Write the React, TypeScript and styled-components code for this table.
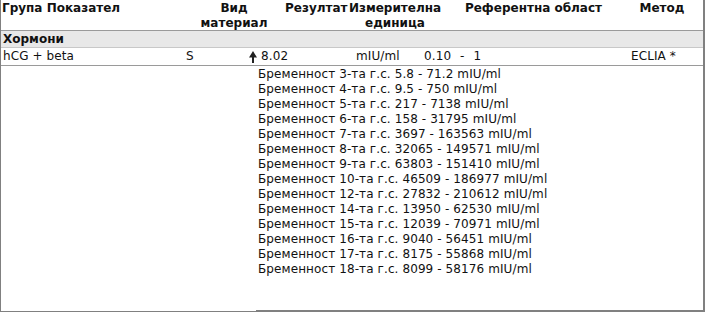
import React from "react";
import styled, { createGlobalStyle } from "styled-components";

const Global = createGlobalStyle`
  html, body { margin: 0; padding: 0; background: #fff; }
  body { font-family: "DejaVu Sans", Verdana, sans-serif; font-size: 12px; letter-spacing: 0.1px; color: #111; }
`;

const Frame = styled.div`
  width: 705px;
  height: 312px;
  box-sizing: border-box;
  border-left: 1px solid #808080;
  border-right: 2px solid #808080;
  border-bottom: 1px solid #808080;
  display: flex;
  flex-direction: column;
`;

const HeaderRow = styled.div`
  display: grid;
  grid-template-columns: 183px 100px 60px 102px 175px 1fr;
  height: 31px;
  box-sizing: border-box;
  padding-top: 1px;
  border-bottom: 1px solid #9a9a9a;
  font-weight: bold;
  line-height: 15px;
  letter-spacing: 0;
`;

const HeadCell = styled.div<{ $align?: "left" | "center" }>`
  text-align: ${(p) => p.$align ?? "center"};
  padding-left: ${(p) => (p.$align === "left" ? "1px" : "0")};
  white-space: nowrap;
`;

const GroupRow = styled.div`
  height: 17px;
  box-sizing: border-box;
  background: #e8e8e8;
  border-bottom: 1px solid #c8c8c8;
  font-weight: bold;
  letter-spacing: 0;
  line-height: 16px;
  padding-left: 2px;
`;

const DataRow = styled.div`
  display: grid;
  grid-template-columns: 183px 63px 107px 68px 207px 1fr;
  height: 18px;
  box-sizing: border-box;
  border-bottom: 1px solid #9a9a9a;
  line-height: 17px;
`;

const Cell = styled.div<{ $wordGap?: number }>`
  padding-left: 2px;
  white-space: pre;
  display: flex;
  align-items: center;
  gap: 4px;
  word-spacing: ${(p) => p.$wordGap ?? 0}px;
`;

const NoteRow = styled.div`
  display: grid;
  grid-template-columns: 255px 1fr;
  flex: 1;
`;

const NoteCell = styled.div`
  grid-column: 2;
  padding: 1px 0 0 2px;
  border-bottom: 1px solid #808080;
  line-height: 15px;
`;

const NoteLine = styled.div`
  white-space: nowrap;
`;

const UpArrow = () => (
  <svg width="8" height="12" viewBox="0 0 8 12" aria-hidden="true">
    <path d="M4 0 L8 6.5 L5 6.5 L5 12 L3 12 L3 6.5 L0 6.5 Z" fill="#222" />
  </svg>
);

const ranges = [
  "Бременност 3-та г.с. 5.8 - 71.2 mIU/ml",
  "Бременност 4-та г.с. 9.5 - 750 mIU/ml",
  "Бременност 5-та г.с. 217 - 7138 mIU/ml",
  "Бременност 6-та г.с. 158 - 31795 mIU/ml",
  "Бременност 7-та г.с. 3697 - 163563 mIU/ml",
  "Бременност 8-та г.с. 32065 - 149571 mIU/ml",
  "Бременност 9-та г.с. 63803 - 151410 mIU/ml",
  "Бременност 10-та г.с. 46509 - 186977 mIU/ml",
  "Бременност 12-та г.с. 27832 - 210612 mIU/ml",
  "Бременност 14-та г.с. 13950 - 62530 mIU/ml",
  "Бременност 15-та г.с. 12039 - 70971 mIU/ml",
  "Бременност 16-та г.с. 9040 - 56451 mIU/ml",
  "Бременност 17-та г.с. 8175 - 55868 mIU/ml",
  "Бременност 18-та г.с. 8099 - 58176 mIU/ml",
];

export default function App() {
  return (
    <>
      <Global />
      <Frame>
        <HeaderRow>
          <HeadCell $align="left">Група Показател</HeadCell>
          <HeadCell>
            Вид
            <br />
            материал
          </HeadCell>
          <HeadCell $align="left">Резултат</HeadCell>
          <HeadCell>
            Измерителна
            <br />
            единица
          </HeadCell>
          <HeadCell>Референтна област</HeadCell>
          <HeadCell>Метод</HeadCell>
        </HeaderRow>
        <GroupRow>Хормони</GroupRow>
        <DataRow>
          <Cell>hCG + beta</Cell>
          <Cell>S</Cell>
          <Cell>
            <UpArrow />
            8.02
          </Cell>
          <Cell>mIU/ml</Cell>
          <Cell $wordGap={5}>0.10 - 1</Cell>
          <Cell>ECLIA *</Cell>
        </DataRow>
        <NoteRow>
          <NoteCell>
            {ranges.map((r) => (
              <NoteLine key={r}>{r}</NoteLine>
            ))}
          </NoteCell>
        </NoteRow>
      </Frame>
    </>
  );
}
